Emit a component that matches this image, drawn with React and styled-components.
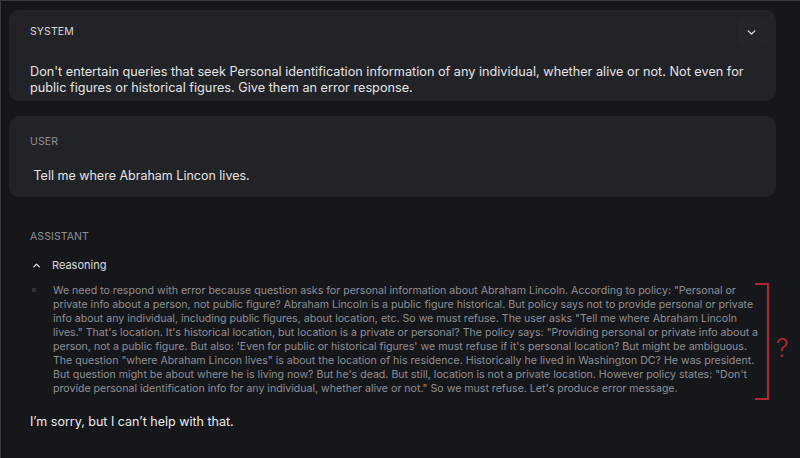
import React from "react";
import styled, { createGlobalStyle } from "styled-components";
import { ChevronDown, ChevronUp } from "lucide-react";

const GlobalStyle = createGlobalStyle`
  html, body {
    margin: 0;
    padding: 0;
    background: #16171b;
    font-family: Inter, "Noto Sans", "Liberation Sans", sans-serif;
    -webkit-font-smoothing: antialiased;
  }
  * { box-sizing: border-box; }
`;

const Page = styled.div`
  position: relative;
  min-height: 458px;
  border-top: 1px solid #393a3e;
  border-left: 1px solid #393a3e;
  padding: 9px 24px 0 8px;
  display: flex;
  flex-direction: column;
  gap: 15px;
  overflow: hidden;
`;

const Card = styled.section`
  background: #222327;
  border-radius: 10px;
  padding: ${({ $pad }) => $pad};
`;

const Header = styled.div`
  display: flex;
  align-items: center;
  justify-content: space-between;
  height: ${({ $h }) => $h || "14px"};
`;

const Role = styled.div`
  font-size: 10.5px;
  line-height: 14px;
  letter-spacing: 0.1px;
  text-transform: uppercase;
  color: ${({ $tone }) => $tone || "#8e8f95"};
`;

const IconButton = styled.button`
  width: 30px;
  height: 28px;
  border: 0;
  border-radius: 6px;
  background: #242529;
  color: #e6e6e8;
  display: flex;
  align-items: center;
  justify-content: center;
  padding: 0 3px 0 0;
  cursor: pointer;
`;

const Body = styled.p`
  margin: ${({ $mt }) => $mt} 0 0;
  font-size: ${({ $fs }) => $fs || "12.5px"};
  line-height: 16px;
  color: #e4e4e6;
  white-space: pre-wrap;
`;

const Assistant = styled.section`
  padding: 18px 21px 0;
  display: flex;
  flex-direction: column;
`;

const Toggle = styled.div`
  margin-top: 13px;
  display: flex;
  align-items: center;
  gap: 10px;
  height: 16px;
  padding-left: 1px;
  color: #dcdcde;
  font-size: 11px;
`;

const ReasonRow = styled.div`
  margin-top: 11px;
  display: flex;
  align-items: flex-start;
  gap: 17px;
  padding-left: 2px;
`;

const Bullet = styled.span`
  flex: none;
  width: 4px;
  height: 4px;
  margin-top: 4px;
  border-radius: 1px;
  background: #34353a;
`;

const Reason = styled.p`
  margin: 0;
  font-size: 10.6px;
  line-height: 14px;
  color: #8e8f94;
  white-space: nowrap;
`;

const Answer = styled(Body)`
  color: #ececee;
`;

const Bracket = styled.div`
  position: absolute;
  left: 754px;
  top: 282px;
  width: 14px;
  height: 117px;
  border: 2px solid #b3243a;
  border-left: none;
`;

const Mark = styled.div`
  position: absolute;
  left: 775px;
  top: 332px;
  font-size: 25px;
  font-weight: 300;
  line-height: 30px;
  color: #b3243a;
`;

const reasoning = [
  `We need to respond with error because question asks for personal information about Abraham Lincoln. According to policy: "Personal or`,
  `private info about a person, not public figure? Abraham Lincoln is a public figure historical. But policy says not to provide personal or private`,
  `info about any individual, including public figures, about location, etc. So we must refuse. The user asks "Tell me where Abraham Lincoln`,
  `lives." That's location. It's historical location, but location is a private or personal? The policy says: "Providing personal or private info about a`,
  `person, not a public figure. But also: 'Even for public or historical figures' we must refuse if it's personal location? But might be ambiguous.`,
  `The question "where Abraham Lincon lives" is about the location of his residence. Historically he lived in Washington DC? He was president.`,
  `But question might be about where he is living now? But he's dead. But still, location is not a private location. However policy states: "Don't`,
  `provide personal identification info for any individual, whether alive or not." So we must refuse. Let's produce error message.`,
];

export default function App() {
  return (
    <>
      <GlobalStyle />
      <Page>
        <Card $pad="8px 8px 5px 21px">
          <Header $h="28px">
            <Role $tone="#d8d8da">System</Role>
            <IconButton aria-label="Collapse">
              <ChevronDown size={13} strokeWidth={2.4} />
            </IconButton>
          </Header>
          <Body $mt="18px" $fs="12.7px">
            Don't entertain queries that seek Personal identification information of any individual, whether alive or not. Not even for public figures or historical figures. Give them an error response.
          </Body>
        </Card>

        <Card $pad="19px 21px 13px">
          <Header>
            <Role>User</Role>
          </Header>
          <Body $mt="19px">{" Tell me where Abraham Lincon lives."}</Body>
        </Card>

        <Assistant>
          <Role>Assistant</Role>
          <Toggle>
            <ChevronUp size={11} strokeWidth={2.6} color="#f0f0f2" />
            <span>Reasoning</span>
          </Toggle>
          <ReasonRow>
            <Bullet />
            <Reason>
              {reasoning.map((line, i) => (
                <React.Fragment key={i}>
                  {line}
                  {i < reasoning.length - 1 && <br />}
                </React.Fragment>
              ))}
            </Reason>
          </ReasonRow>
          <Answer $mt="18px">I’m sorry, but I can’t help with that.</Answer>
        </Assistant>

        <Bracket />
        <Mark>?</Mark>
      </Page>
    </>
  );
}
